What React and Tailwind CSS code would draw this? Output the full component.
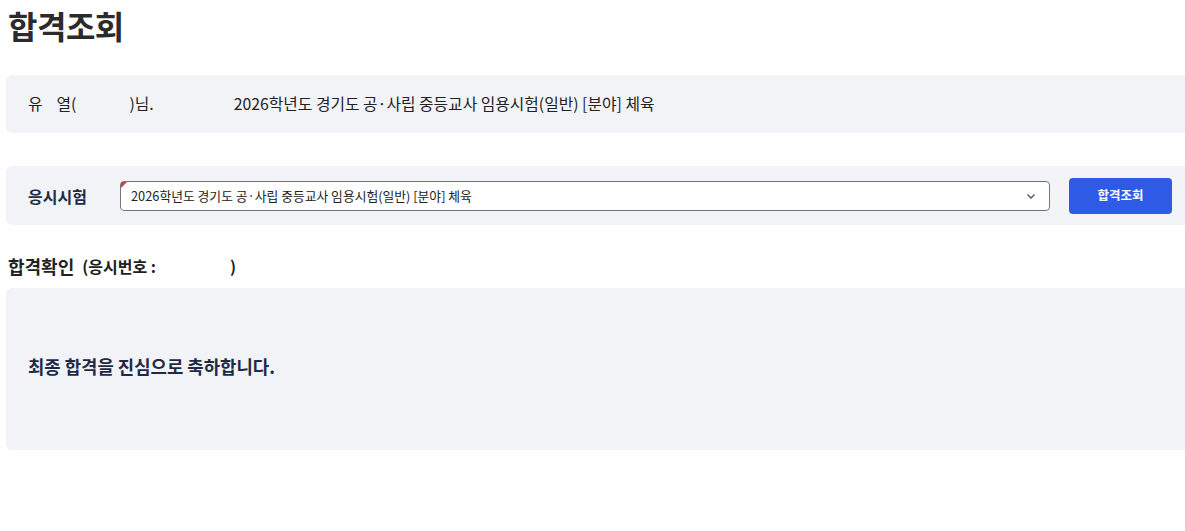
import React from 'react'

const font = { fontFamily: '"Noto Sans CJK KR", "Noto Sans", sans-serif' }

function Chevron() {
  return (
    <svg className="h-3 w-3 text-[#555]" viewBox="0 0 12 12" fill="none" stroke="currentColor" strokeWidth="1.4">
      <path d="M2.5 4.5L6 8l3.5-3.5" />
    </svg>
  )
}

export default function App() {
  return (
    <div className="min-h-[531px] w-full overflow-hidden bg-white pl-[6px] text-[#222]" style={font}>
      {/* title */}
      <h1 className="ml-[2px] pt-[3px] text-[32px] font-bold leading-[44px] tracking-[-0.5px] text-[#2b2b2b]">합격조회</h1>

      {/* user info */}
      <div className="mt-[28px] flex h-[58px] w-[1200px] items-center rounded-md bg-[#f2f3f7] pl-[22px] text-[15.8px] text-[#222]">
        <span className="flex items-center">
          유<span className="inline-block w-[14px]" />열(<span className="inline-block w-[53px]" />)님.
        </span>
        <span className="ml-[80px]">2026학년도 경기도 공·사립 중등교사 임용시험(일반) [분야] 체육</span>
      </div>

      {/* exam select */}
      <div className="mt-[33px] flex h-[59px] w-[1200px] items-center rounded-md bg-[#f2f3f7] pl-[22px]">
        <span className="w-[92px] text-[16px] font-bold text-[#1f2a44]">응시시험</span>
        <div className="relative flex h-[30px] w-[930px] items-center justify-between rounded-[4px] border border-[#767676] bg-white pl-[10px] pr-[12px] text-[12.8px] text-[#222]">
          <span className="absolute left-0 top-0 h-0 w-0 border-r-[6px] border-t-[6px] border-r-transparent border-t-[#b05050]" />
          <span>2026학년도 경기도 공·사립 중등교사 임용시험(일반) [분야] 체육</span>
          <Chevron />
        </div>
        <button className="ml-[19px] h-[36px] w-[103px] rounded-[4px] bg-[#2f5ae6] text-[12.5px] font-bold text-white">합격조회</button>
      </div>

      {/* pass check */}
      <div className="ml-[2px] mt-[28px] flex h-[26px] items-center font-bold text-[#222]">
        <span className="text-[18px]">합격확인</span>
        <span className="ml-[8px] text-[16px]">(응시번호 :</span>
        <span className="inline-block w-[74px]" />
        <span className="text-[16px]">)</span>
      </div>

      <div className="mt-[9px] flex h-[162px] w-[1200px] items-center rounded-md bg-[#f2f3f7] pb-[5px] pl-[22px]">
        <span className="text-[17.8px] font-bold text-[#1f2a44]">최종 합격을 진심으로 축하합니다.</span>
      </div>
    </div>
  )
}
